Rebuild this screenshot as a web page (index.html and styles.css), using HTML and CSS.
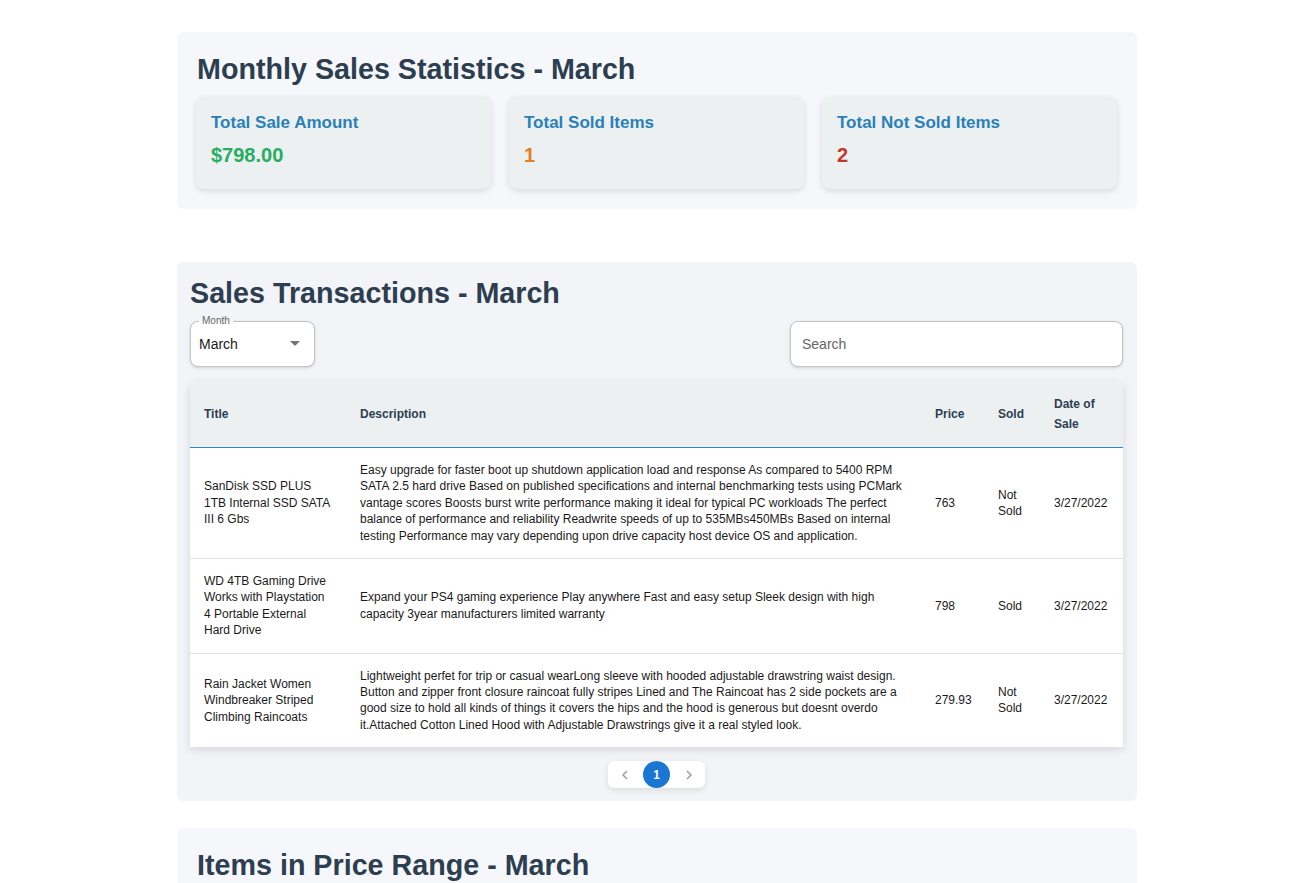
FILE: index.html
```html
<!DOCTYPE html>
<html lang="en">
<head>
<meta charset="utf-8">
<title>Sales Dashboard</title>
<link rel="stylesheet" href="styles.css">
</head>
<body>
<div class="page">
  <section class="panel stats">
    <h2 class="panel-title">Monthly Sales Statistics - March</h2>
    <div class="cards">
      <div class="card">
        <div class="card-label">Total Sale Amount</div>
        <div class="card-value green">$798.00</div>
      </div>
      <div class="card">
        <div class="card-label">Total Sold Items</div>
        <div class="card-value orange">1</div>
      </div>
      <div class="card">
        <div class="card-label">Total Not Sold Items</div>
        <div class="card-value red">2</div>
      </div>
    </div>
  </section>

  <section class="panel transactions">
    <h2 class="panel-title tx-title">Sales Transactions - March</h2>
    <div class="controls">
      <div class="select">
        <span class="select-label">Month</span>
        <span class="select-value">March</span>
        <svg class="select-arrow" width="10" height="5" viewBox="0 0 10 5"><path d="M0 0 L10 0 L5 5 Z" fill="#757575"/></svg>
      </div>
      <div class="search"><span class="search-ph">Search</span></div>
    </div>
    <div class="table-wrap">
      <table class="tx-table">
        <colgroup>
          <col class="c-title"><col class="c-desc"><col class="c-price"><col class="c-sold"><col class="c-date">
        </colgroup>
        <thead>
          <tr><th>Title</th><th>Description</th><th>Price</th><th>Sold</th><th>Date of Sale</th></tr>
        </thead>
        <tbody>
          <tr>
            <td>SanDisk SSD PLUS 1TB Internal SSD SATA III 6 Gbs</td>
            <td>Easy upgrade for faster boot up shutdown application load and response As compared to 5400 RPM SATA 2.5 hard drive Based on published specifications and internal benchmarking tests using PCMark vantage scores Boosts burst write performance making it ideal for typical PC workloads The perfect balance of performance and reliability Readwrite speeds of up to 535MBs450MBs Based on internal testing Performance may vary depending upon drive capacity host device OS and application.</td>
            <td>763</td>
            <td>Not Sold</td>
            <td>3/27/2022</td>
          </tr>
          <tr>
            <td>WD 4TB Gaming Drive Works with Playstation 4 Portable External Hard Drive</td>
            <td>Expand your PS4 gaming experience Play anywhere Fast and easy setup Sleek design with high capacity 3year manufacturers limited warranty</td>
            <td>798</td>
            <td>Sold</td>
            <td>3/27/2022</td>
          </tr>
          <tr>
            <td>Rain Jacket Women Windbreaker Striped Climbing Raincoats</td>
            <td>Lightweight perfet for trip or casual wearLong sleeve with hooded adjustable drawstring waist design. Button and zipper front closure raincoat fully stripes Lined and The Raincoat has 2 side pockets are a good size to hold all kinds of things it covers the hips and the hood is generous but doesnt overdo it.Attached Cotton Lined Hood with Adjustable Drawstrings give it a real styled look.</td>
            <td>279.93</td>
            <td>Not Sold</td>
            <td>3/27/2022</td>
          </tr>
        </tbody>
      </table>
    </div>
    <div class="pager-row">
      <div class="pager">
        <span class="pg-arrow"><svg width="8" height="10" viewBox="0 0 8 10"><path d="M6 1 L2 5 L6 9" fill="none" stroke="#9e9e9e" stroke-width="1.5"/></svg></span>
        <span class="pg-num">1</span>
        <span class="pg-arrow"><svg width="8" height="10" viewBox="0 0 8 10"><path d="M2 1 L6 5 L2 9" fill="none" stroke="#9e9e9e" stroke-width="1.5"/></svg></span>
      </div>
    </div>
  </section>

  <section class="panel range">
    <h2 class="panel-title">Items in Price Range - March</h2>
  </section>
</div>
</body>
</html>
```

FILE: styles.css
```css
* { box-sizing: border-box; }
html, body { margin: 0; padding: 0; background: #ffffff; }
body {
  font-family: "Liberation Sans", Arial, sans-serif;
  color: #1a1a1a;
}
.page {
  width: 960px;
  margin: 0 0 0 177px;
  padding-top: 32px;
}
.panel {
  background: #f5f7fa;
  border-radius: 6px;
}
.panel-title {
  margin: 0;
  font-size: 28.7px;
  line-height: 34px;
  font-weight: 700;
  color: #2c3e50;
}
.stats {
  padding: 20px 20px 20px 19px;
  margin-bottom: 53px;
}
.stats .panel-title { padding-left: 1px; }
.cards {
  display: flex;
  gap: 18px;
  margin-top: 11px;
}
.card {
  flex: 1;
  height: 92px;
  background: #ecf0f1;
  border-radius: 8px;
  box-shadow: 0 2px 6px rgba(0,0,0,0.12);
  padding: 16px 15px 14px;
}
.card-label {
  font-size: 17px;
  line-height: 20px;
  font-weight: 700;
  color: #2980b9;
}
.card-value {
  margin-top: 10px;
  font-size: 20px;
  line-height: 24px;
  font-weight: 700;
}
.green { color: #27ae60; }
.orange { color: #e67e22; }
.red { color: #c0392b; }

.transactions {
  background: #f3f4f8;
  padding: 14px 14px 13px 13px;
  margin-bottom: 27px;
}
.controls {
  display: flex;
  justify-content: space-between;
  margin-top: 11px;
}
.select {
  position: relative;
  width: 125px;
  height: 46px;
  background: #ffffff;
  border: 1px solid #c4c4c4;
  border-radius: 8px;
  box-shadow: 0 1px 3px rgba(0,0,0,0.15);
  display: flex;
  align-items: center;
  padding: 0 14px 1px 8px;
}
.select-label {
  position: absolute;
  top: -7px;
  left: 8px;
  padding: 0 3px;
  font-size: 10px;
  line-height: 12px;
  color: #666;
  background: linear-gradient(#f3f4f8 50%, #ffffff 50%);
}
.select-value {
  flex: 1;
  font-size: 14px;
  color: #1a1a1a;
}
.search {
  width: 333px;
  height: 46px;
  background: #ffffff;
  border: 1px solid #c4c4c4;
  border-radius: 8px;
  box-shadow: 0 1px 3px rgba(0,0,0,0.15);
  display: flex;
  align-items: center;
  padding: 0 11px 1px;
}
.search-ph {
  font-size: 14px;
  color: #666;
}
.table-wrap {
  margin-top: 14px;
  background: #ffffff;
  border-radius: 4px 4px 0 0;
  box-shadow: 0 3px 8px rgba(0,0,0,0.12);
  overflow: hidden;
}
.tx-table {
  width: 933px;
  border-collapse: collapse;
  table-layout: fixed;
  font-size: 12px;
}
.c-title { width: 156px; }
.c-desc { width: 575px; }
.c-price { width: 63px; }
.c-sold { width: 56px; }
.c-date { width: 83px; }
.tx-table th {
  background: #ecf0f1;
  text-align: left;
  font-weight: 700;
  color: #2c3e50;
  line-height: 20px;
  padding: 13px 14px 13px;
  border-bottom: 1px solid #2f86c4;
}
.tx-table td {
  line-height: 16.4px;
  padding: 14px 14px;
  vertical-align: middle;
  color: #1a1a1a;
  border-bottom: 1px solid #e0e0e0;
}
.tx-table tbody tr:last-child td { border-bottom: none; }
.pager-row {
  display: flex;
  justify-content: center;
  margin-top: 14px;
}
.pager {
  display: flex;
  align-items: center;
  gap: 5px;
  background: #ffffff;
  border-radius: 6px;
  box-shadow: 0 2px 6px rgba(0,0,0,0.1);
  height: 27px;
  padding: 0 3px;
}
.pg-arrow {
  width: 27px;
  height: 27px;
  display: flex;
  align-items: center;
  justify-content: center;
}
.pg-num {
  width: 27px;
  height: 27px;
  border-radius: 50%;
  background: #1976d2;
  color: #fff;
  font-size: 12px;
  font-weight: 700;
  display: flex;
  align-items: center;
  justify-content: center;
}
.range {
  padding: 20px 20px 20px 20px;
  min-height: 120px;
}
```
